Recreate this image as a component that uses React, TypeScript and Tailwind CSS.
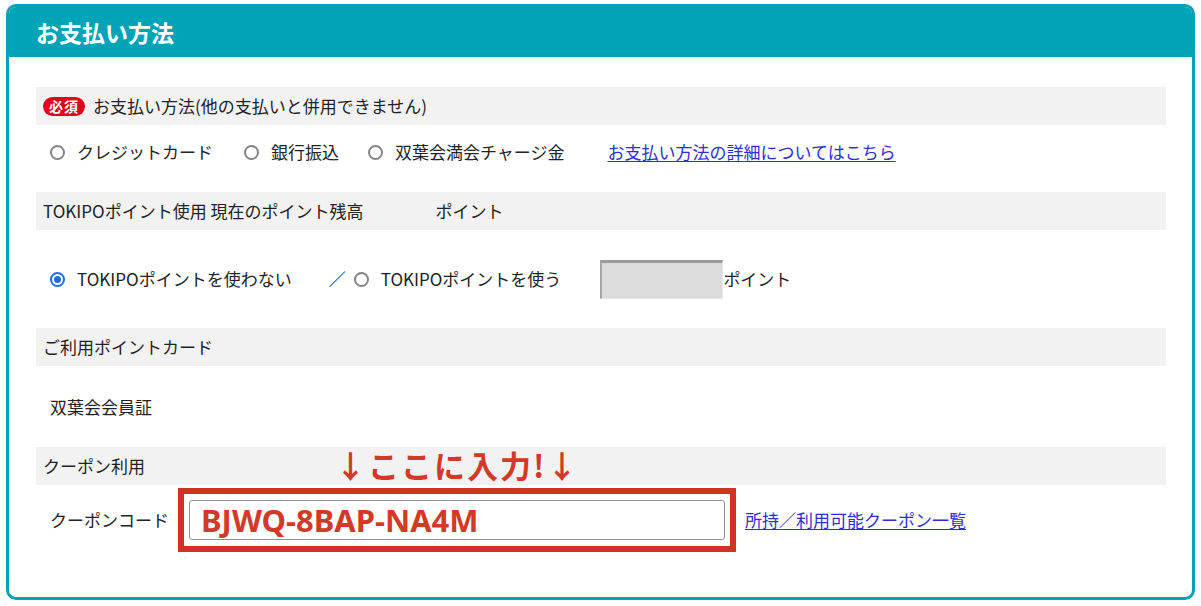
import React from 'react'

function Radio({ checked = false }: { checked?: boolean }) {
  if (checked) {
    return (
      <span className="w-[15px] h-[15px] rounded-full border-2 border-[#1c6fe3] bg-white shrink-0 flex items-center justify-center">
        <span className="block w-[7px] h-[7px] rounded-full bg-[#1c6fe3]" />
      </span>
    )
  }
  return <span className="block w-[15px] h-[15px] rounded-full border-2 border-[#858585] bg-white shrink-0" />
}

function GrayRow({ children }: { children: React.ReactNode }) {
  return (
    <div className="relative h-[38px] bg-[#f3f2f3] flex items-center pl-[7px] text-[#222]">
      {children}
    </div>
  )
}

export default function App() {
  return (
    <div
      className="w-[1201px] h-[606px] bg-white pt-[4px] pl-[6px]"
      style={{ fontFamily: "'Noto Sans CJK JP', 'Noto Sans', sans-serif" }}
    >
      <div className="w-[1189px] h-[596px] rounded-[10px] border-[3px] border-[#0aa1b3] overflow-hidden flex flex-col text-[17px] leading-[24px]">
        {/* Header */}
        <div className="h-[50px] bg-[#00a4b6] flex items-center pl-[27px]">
          <span className="text-white text-[23px] font-bold">お支払い方法</span>
        </div>

        {/* Body */}
        <div className="flex-1 pt-[30px] pl-[27px] pr-[26px]">
          {/* Payment method */}
          <GrayRow>
            <span className="h-[19px] px-[6px] rounded-full bg-[#e4001b] text-white text-[14px] font-bold leading-[19px] flex items-center mr-[8px] tracking-[1px]">
              必須
            </span>
            <span>お支払い方法(他の支払いと併用できません)</span>
          </GrayRow>
          <div className="h-[67px] pt-[15px] pl-[14px] text-[#222]">
            <div className="flex items-center h-[24px]">
              <Radio />
              <span className="ml-[12px]">クレジットカード</span>
              <span className="ml-[31px]"><Radio /></span>
              <span className="ml-[12px]">銀行振込</span>
              <span className="ml-[29px]"><Radio /></span>
              <span className="ml-[12px]">双葉会満会チャージ金</span>
              <a href="#" className="ml-[43px] text-[#2e2ed8] underline underline-offset-2">
                お支払い方法の詳細についてはこちら
              </a>
            </div>
          </div>

          {/* TOKIPO points */}
          <GrayRow>
            <span>TOKIPOポイント使用 現在のポイント残高</span>
            <span className="ml-[72px]">ポイント</span>
          </GrayRow>
          <div className="h-[98px] pl-[14px] flex items-center text-[#222]">
            <Radio checked />
            <span className="ml-[12px]">TOKIPOポイントを使わない</span>
            <span className="ml-[37px]">／</span>
            <span className="ml-[8px]"><Radio /></span>
            <span className="ml-[12px]">TOKIPOポイントを使う</span>
            <span className="block ml-[39px] w-[123px] h-[39px] bg-[#dcdcdc] border-t-[3px] border-l-2 border-t-[#9b9b9b] border-l-[#a5a5a5] border-r border-b border-r-[#e6e6e6] border-b-[#e6e6e6]" />
            <span>ポイント</span>
          </div>

          {/* Point card */}
          <GrayRow>
            <span>ご利用ポイントカード</span>
          </GrayRow>
          <div className="h-[81px] pl-[14px] flex items-center text-[#222]">
            <span>双葉会会員証</span>
          </div>

          {/* Coupon */}
          <GrayRow>
            <span>クーポン利用</span>
            <span className="absolute left-[299px] top-[-2px] text-[#d23a28] text-[31px] font-bold leading-[40px] tracking-[2px]">
              ↓ここに入力!↓
            </span>
          </GrayRow>
          <div className="pt-[3px] pl-[14px] flex items-center text-[#222]">
            <span>クーポンコード</span>
            <div className="ml-[9px] border-[6px] border-[#cf3422] px-[5px] py-[6px]">
              <div className="w-[536px] h-[40px] rounded-[3px] border border-[#8f8f9a] bg-white flex items-center pl-[11px]">
                <span
                  className="text-[#d23a28] text-[31px] font-bold leading-none"
                  style={{ fontFamily: "'Noto Sans', 'Open Sans', sans-serif" }}
                >
                  BJWQ-8BAP-NA4M
                </span>
              </div>
            </div>
            <a href="#" className="ml-[9px] text-[#2e2ed8] underline underline-offset-2">
              所持／利用可能クーポン一覧
            </a>
          </div>
        </div>
      </div>
    </div>
  )
}
